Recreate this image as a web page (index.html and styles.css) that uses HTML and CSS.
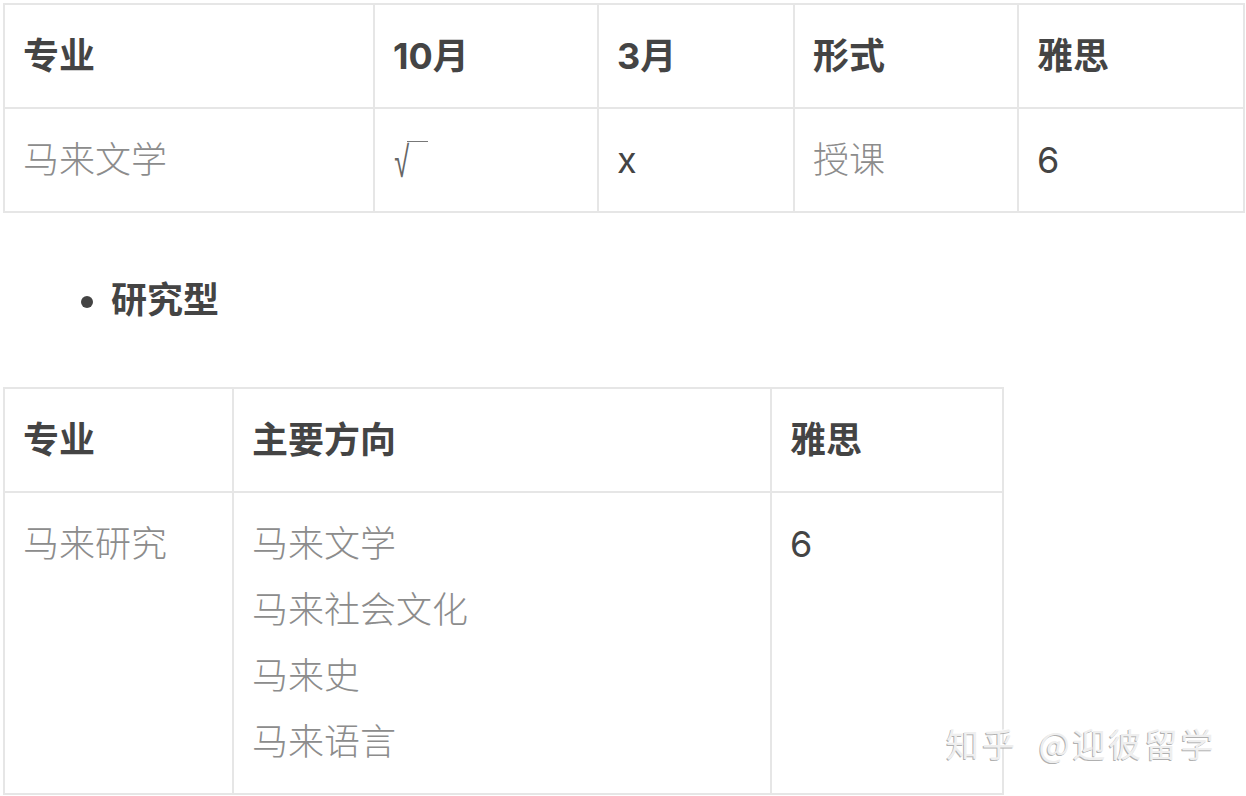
FILE: index.html
```html
<!DOCTYPE html>
<html lang="zh-CN">
<head>
<meta charset="utf-8">
<title>马来研究</title>
<link rel="stylesheet" href="styles.css">
</head>
<body>
<div class="page">
  <table class="t t1">
    <colgroup>
      <col class="c370"><col class="c224"><col class="c196"><col class="c224"><col class="c226">
    </colgroup>
    <thead>
      <tr><th>专业</th><th>10月</th><th>3月</th><th>形式</th><th>雅思</th></tr>
    </thead>
    <tbody>
      <tr>
        <td class="cjk">马来文学</td>
        <td class="sym"><span class="root">√</span><span class="bar"></span></td>
        <td class="num">x</td>
        <td class="cjk">授课</td>
        <td class="num">6</td>
      </tr>
    </tbody>
  </table>

  <ul class="list">
    <li>研究型</li>
  </ul>

  <table class="t t2">
    <colgroup>
      <col class="c229"><col class="c538"><col class="c232">
    </colgroup>
    <thead>
      <tr><th>专业</th><th>主要方向</th><th>雅思</th></tr>
    </thead>
    <tbody>
      <tr>
        <td class="cjk">马来研究</td>
        <td class="cjk">马来文学<br>马来社会文化<br>马来史<br>马来语言</td>
        <td class="num">6</td>
      </tr>
    </tbody>
  </table>

  <div class="watermark">知乎 @迎彼留学</div>
</div>
</body>
</html>
```

FILE: styles.css
```css
html, body {
  margin: 0;
  padding: 0;
  background: #ffffff;
}

body {
  font-family: "Inter", "Noto Sans CJK SC", sans-serif;
  font-size: 36px;
  line-height: 66px;
  color: #444444;
}

.page {
  padding: 3px 0 0 3px;
  position: relative;
  height: 793px;
  overflow: hidden;
}

.t {
  border-collapse: separate;
  border-spacing: 0;
  table-layout: fixed;
  border-top: 2px solid #e6e6e6;
  border-left: 2px solid #e6e6e6;
}

.t1 { width: 1242px; }
.t2 { width: 1001px; }

.c370 { width: 370px; }
.c224 { width: 224px; }
.c196 { width: 196px; }
.c226 { width: 226px; }
.c229 { width: 229px; }
.c538 { width: 538px; }
.c232 { width: 232px; }

.t th,
.t td {
  border-right: 2px solid #e6e6e6;
  border-bottom: 2px solid #e6e6e6;
  padding: 18px 18px;
  text-align: left;
  vertical-align: top;
  line-height: 66px;
}

.t th {
  font-weight: 700;
  color: #444444;
}

.t td {
  font-weight: 400;
}

.t td.cjk {
  color: #8c8c8c;
  font-weight: 300;
}

.t td.num {
  color: #444444;
}

.t td.sym {
  color: #666666;
}

.root {
  font-family: "DejaVu Sans", sans-serif;
  font-size: 32px;
  line-height: 0;
  font-weight: 300;
  display: inline-block;
  vertical-align: baseline;
  transform: scale(0.85, 1.35);
  transform-origin: 50% 70%;
}

.bar {
  display: inline-block;
  width: 21px;
  height: 0;
  border-top: 1.5px solid #777777;
  vertical-align: 31px;
  margin-left: -4px;
}

.list {
  margin: 54px 0 54px 0;
  padding: 0 0 0 108px;
  font-weight: 700;
  color: #444444;
}

.list li {
  line-height: 66px;
}

.watermark {
  position: absolute;
  left: 946px;
  top: 718px;
  font-family: "Noto Sans CJK SC", sans-serif;
  font-size: 33px;
  letter-spacing: 3px;
  word-spacing: 10px;
  line-height: 50px;
  color: #efefef;
  text-shadow: -1px 1px 0 #b0b0b0, 1px -1px 0 #ffffff;
  white-space: nowrap;
}
```
